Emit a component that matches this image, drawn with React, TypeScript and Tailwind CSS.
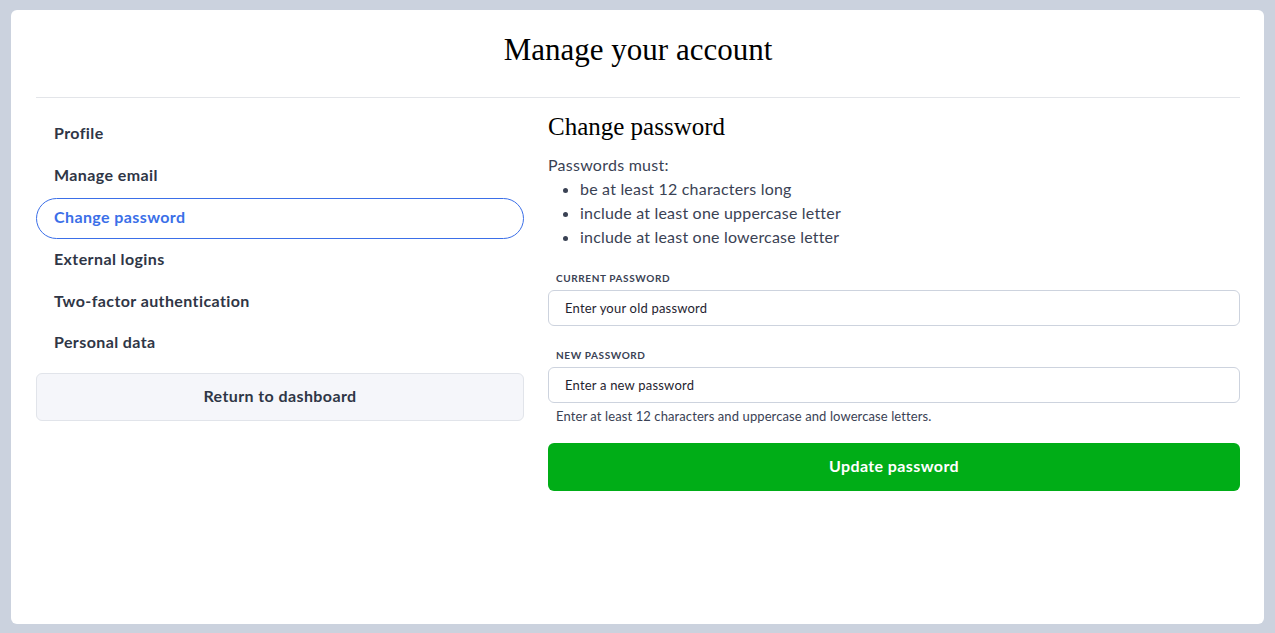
const navItems = [
  'Profile',
  'Manage email',
  'Change password',
  'External logins',
  'Two-factor authentication',
  'Personal data'
]

const rules = [
  'be at least 12 characters long',
  'include at least one uppercase letter',
  'include at least one lowercase letter'
]

function Field({ label, placeholder }: { label: string; placeholder: string }) {
  return (
    <div>
      <label className="block pl-2 text-[10px] font-bold uppercase leading-4 tracking-[0.06em] text-[#3a4254]">
        {label}
      </label>
      <input
        type="password"
        placeholder={placeholder}
        className="mt-1 block h-9 w-full rounded-md border border-[#cdd3de] bg-white px-4 text-[13px] tracking-[0.2px] text-[#1f2430] outline-none placeholder:text-[#1f2430]"
      />
    </div>
  )
}

export default function App() {
  const active = 'Change password'

  return (
    <div className="min-h-[633px] bg-[#cbd2de] px-[11px] pt-[10px] pb-[9px] font-['Lato',sans-serif] text-[#2f3646]">
      <div className="min-h-[614px] rounded-md bg-white pl-[25px] pr-[24px] pt-[25px]">
        <div className="flex h-[63px] items-start justify-center border-b border-[#e3e5e9]">
          <h1 className="font-['Liberation_Serif',serif] text-[31px] leading-[30px] text-black">
            Manage your account
          </h1>
        </div>

        <div className="mt-4 flex gap-6">
          <div className="w-[488px] shrink-0">
            <nav className="flex flex-col">
              {navItems.map((item) => (
                <a
                  key={item}
                  href="#"
                  className={
                    item === active
                      ? 'flex h-[41.8px] items-center rounded-full border border-[#3b6fe8] px-[17px] pb-[3px] text-[16px] font-bold tracking-[0.4px] text-[#3b6fe8]'
                      : 'flex h-[41.8px] items-center border border-transparent px-[17px] pb-[3px] text-[16px] font-bold tracking-[0.4px] text-[#2f3646]'
                  }
                >
                  {item}
                </a>
              ))}
            </nav>
            <button className="mt-[8px] h-12 w-full rounded-md border border-[#e1e4ea] bg-[#f5f6fa] pb-[2px] text-[16px] font-bold tracking-[0.4px] text-[#2f3646]">
              Return to dashboard
            </button>
          </div>

          <div className="-mt-px flex-1">
            <h2 className="font-['Liberation_Serif',serif] text-[25px] leading-[28px] text-black">
              Change password
            </h2>
            <p className="mt-[12px] text-[16px] leading-6 tracking-[0.25px] text-[#3a4254]">Passwords must:</p>
            <ul className="list-disc pl-8 text-[16px] leading-6 tracking-[0.2px] text-[#3a4254]">
              {rules.map((rule) => (
                <li key={rule}>{rule}</li>
              ))}
            </ul>

            <div className="mt-[21px]">
              <Field label="Current password" placeholder="Enter your old password" />
            </div>
            <div className="mt-[21px]">
              <Field label="New password" placeholder="Enter a new password" />
            </div>
            <p className="mt-[5px] pl-2 text-[13px] leading-4 tracking-[0.1px] text-[#3a4254]">
              Enter at least 12 characters and uppercase and lowercase letters.
            </p>

            <button className="mt-[19px] h-12 w-full rounded-md bg-[#00ad17] pb-[2px] text-[16px] font-bold tracking-[0.4px] text-white">
              Update password
            </button>
          </div>
        </div>
      </div>
    </div>
  )
}
